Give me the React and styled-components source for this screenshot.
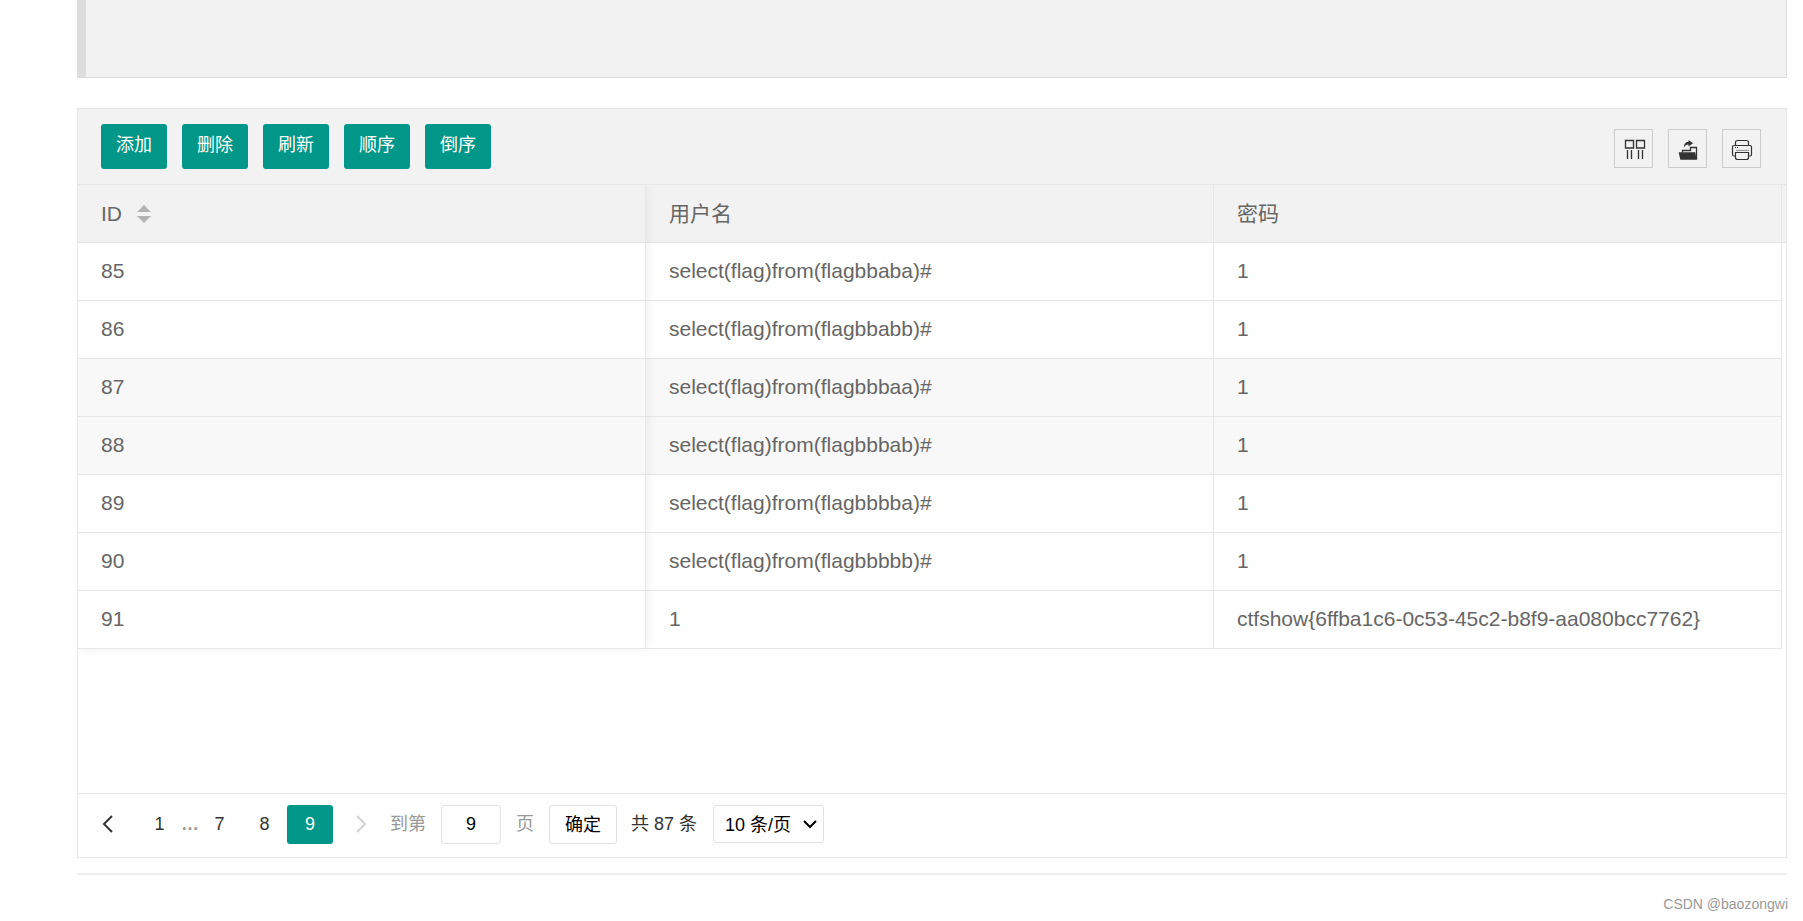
import React from "react";
import styled, { createGlobalStyle, css } from "styled-components";

const Global = createGlobalStyle`
  *, *::before, *::after { box-sizing: border-box; }
  body {
    margin: 0;
    background: #fff;
    color: #666;
    font: 21px/36px "Liberation Sans", "Noto Sans CJK SC", sans-serif;
  }
  button, input, select { font: inherit; margin: 0; }
`;

const Page = styled.main`
  padding: 0 16px 0 77px;
`;

const Quote = styled.blockquote`
  margin: 0 0 30px;
  height: 78px;
  background: #f2f2f2;
  border: 1px solid #ddd;
  border-top: 0;
  border-left: 9px solid #ddd;
`;

const TableView = styled.section`
  border: 1px solid #e6e6e6;
`;

const Toolbar = styled.div`
  display: flex;
  justify-content: space-between;
  align-items: center;
  padding: 15px 25px 15px 23px;
  background: #f2f2f2;
  border-bottom: 1px solid #e6e6e6;
`;

const Group = styled.div`
  display: flex;
  gap: 15px;
`;

const ActionButton = styled.button`
  height: 45px;
  padding: 0 15px 2px;
  border: 0;
  border-radius: 3px;
  background: #009688;
  color: #fff;
  font-size: 18px;
  line-height: 43px;
`;

const ToolButton = styled.button`
  display: block;
  width: 39px;
  height: 39px;
  margin-top: 4px;
  padding: 0;
  border: 1px solid #ccc;
  background: none;
  color: #333;
  svg { display: block; }
`;

const Body = styled.div`
  min-height: 608px;
  background: linear-gradient(#f2f2f2 57px, #e6e6e6 57px, #e6e6e6 58px, transparent 58px);
`;

const Frame = styled.div`
  position: relative;
  margin-right: 4px;
  &::after {
    content: "";
    position: absolute;
    inset: 0 auto 0 0;
    width: calc(100% / 3);
    box-shadow: 1px 0 12px rgba(0, 0, 0, 0.06);
    clip-path: inset(0 -14px -14px 0);
    pointer-events: none;
  }
`;

const Table = styled.table`
  width: 100%;
  table-layout: fixed;
  border-collapse: separate;
  border-spacing: 0;
`;

const cell = css`
  height: 58px;
  padding: 0 22px 0 23px;
  border: solid #e6e6e6;
  border-width: 0 1px 1px 0;
  text-align: left;
  font-weight: 400;
  white-space: nowrap;
`;

const HeadCell = styled.th`
  ${cell}
`;

const Cell = styled.td`
  ${cell}
  padding-bottom: 2px;
  background: ${(p) => (p.$shaded ? "#f8f8f8" : "#fff")};
`;

const SortMark = styled.svg`
  margin-left: 15px;
  vertical-align: -2px;
`;

const Pager = styled.nav`
  display: flex;
  align-items: flex-start;
  height: 64px;
  padding: 11px 7px;
  border-top: 1px solid #e6e6e6;
  font-size: 18px;
  line-height: 39px;
  color: #333;
`;

const PageButton = styled.button`
  display: flex;
  justify-content: center;
  align-items: center;
  width: ${(p) => (p.$wide ? 56 : p.$current ? 46 : 45)}px;
  height: 39px;
  margin-right: ${(p) => (p.$spaced ? 7 : 0)}px;
  padding: 0;
  border: 0;
  border-radius: 3px;
  background: ${(p) => (p.$current ? "#009688" : "none")};
  color: ${(p) => (p.$current ? "#fff" : p.disabled ? "#d2d2d2" : "#333")};
  svg { margin-bottom: 2px; }
`;

const Dots = styled.span`
  width: 15px;
  margin-left: -1px;
  margin-right: 1px;
  color: #999;
  font-weight: 700;
`;

const Skip = styled.label`
  display: flex;
  gap: 15px;
  margin-left: 1px;
  color: #999;
`;

const PageInput = styled.input`
  width: 60px;
  height: 39px;
  padding: 0;
  border: 1px solid #e2e2e2;
  border-radius: 3px;
  background: #fff;
  color: #000;
  text-align: center;
`;

const Confirm = styled.button`
  height: 39px;
  margin: 0 14px 0 15px;
  padding: 0 15px;
  border: 1px solid #e2e2e2;
  border-radius: 3px;
  background: #fff;
  color: #000;
`;

const Limit = styled.span`
  position: relative;
  margin-left: 16px;
  svg {
    position: absolute;
    top: 14px;
    right: 6px;
    pointer-events: none;
  }
`;

const LimitSelect = styled.select`
  display: block;
  width: 111px;
  height: 38px;
  padding: 0 0 0 11px;
  appearance: none;
  border: 1px solid #e2e2e2;
  border-radius: 3px;
  background: #fff;
  color: #000;
`;

const Rule = styled.hr`
  height: 2px;
  margin: 15px 0;
  border: 0;
  background: #eee;
`;

const Credit = styled.footer`
  margin-right: -1px;
  text-align: right;
  font-size: 14px;
  line-height: 28px;
  color: #999;
`;

const rows = [
  ["85", "select(flag)from(flagbbaba)#", "1"],
  ["86", "select(flag)from(flagbbabb)#", "1"],
  ["87", "select(flag)from(flagbbbaa)#", "1"],
  ["88", "select(flag)from(flagbbbab)#", "1"],
  ["89", "select(flag)from(flagbbbba)#", "1"],
  ["90", "select(flag)from(flagbbbbb)#", "1"],
  ["91", "1", "ctfshow{6ffba1c6-0c53-45c2-b8f9-aa080bcc7762}"],
];
const shaded = ["87", "88"];

const ColumnsIcon = () => (
  <svg width="37" height="37" viewBox="0 0 37 37" fill="none" stroke="currentColor" strokeWidth="1.300">
    <path d="M10.500 10.500h8v7.500h-8zM21.500 10.500h8v7.500h-8z" />
    <path d="M12.500 20v9M16.500 20v9M23.500 20v9M27.500 20v9" />
  </svg>
);

const ExportIcon = () => (
  <svg width="37" height="37" viewBox="0 0 37 37" fill="currentColor">
    <path d="M9.700 22.300h16.500l1.500 7.500H12q-.6 0-.8-.6z" />
    <path d="M13.500 22.500V20.500h8v-3h6v12" fill="none" stroke="currentColor" strokeWidth="1.300" />
    <path d="M15 17.500c-.2-3.500 1.500-5.500 4.500-5.500V10l4.500 3.300-4.500 3.200V14.500c-2 0-3.400.8-4.500 3z" />
  </svg>
);

const PrintIcon = () => (
  <svg width="37" height="37" viewBox="0 0 37 37" fill="none" stroke="currentColor" strokeWidth="1.200">
    <path d="M12.500 15v-2.500q0-2 2-2h9q2 0 2 2V15" />
    <path d="M12 26h-1q-1.500 0-1.500-1.500V17q0-1.500 1.500-1.500h16q1.500 0 1.500 1.500v7.500q0 1.500-1.500 1.500h-1" />
    <path d="M12.500 22.500h13v5q0 2-2 2h-9q-2 0-2-2z" />
    <path d="M13 20.500h13" stroke="#999" />
    <path d="M12 17.500h1M14 17.500h1" />
  </svg>
);

const Chevron = ({ d }) => (
  <svg width="14" height="20" viewBox="0 0 14 20" fill="none" stroke="currentColor" strokeWidth="2">
    <path d={d} />
  </svg>
);

export default function App() {
  return (
    <Page>
      <Global />
      <Quote />
      <TableView>
        <Toolbar>
          <Group>
            {["添加", "删除", "刷新", "顺序", "倒序"].map((t) => (
              <ActionButton key={t} type="button">{t}</ActionButton>
            ))}
          </Group>
          <Group>
            <ToolButton type="button" aria-label="筛选列"><ColumnsIcon /></ToolButton>
            <ToolButton type="button" aria-label="导出"><ExportIcon /></ToolButton>
            <ToolButton type="button" aria-label="打印"><PrintIcon /></ToolButton>
          </Group>
        </Toolbar>
        <Body>
          <Frame>
            <Table>
              <thead>
                <tr>
                  <HeadCell>
                    ID
                    <SortMark width="14" height="18" viewBox="0 0 14 18" fill="#b2b2b2">
                      <path d="M7 0l7 7H0zM0 11h14l-7 7z" />
                    </SortMark>
                  </HeadCell>
                  <HeadCell>用户名</HeadCell>
                  <HeadCell>密码</HeadCell>
                </tr>
              </thead>
              <tbody>
                {rows.map((row) => (
                  <tr key={row[0]}>
                    {row.map((value, i) => (
                      <Cell key={i} $shaded={shaded.includes(row[0])}>{value}</Cell>
                    ))}
                  </tr>
                ))}
              </tbody>
            </Table>
          </Frame>
        </Body>
        <Pager>
          <PageButton type="button" aria-label="上一页" $spaced>
            <Chevron d="M11 2L3 10l8 8" />
          </PageButton>
          <PageButton type="button">1</PageButton>
          <Dots>…</Dots>
          <PageButton type="button">7</PageButton>
          <PageButton type="button">8</PageButton>
          <PageButton type="button" $current>9</PageButton>
          <PageButton type="button" aria-label="下一页" disabled $wide>
            <Chevron d="M3 2l8 8-8 8" />
          </PageButton>
          <Skip>
            到第
            <PageInput type="text" defaultValue="9" />
            页
          </Skip>
          <Confirm type="button">确定</Confirm>
          <span>共 87 条</span>
          <Limit>
            <LimitSelect aria-label="每页条数" defaultValue="10">
              <option value="10">10 条/页</option>
              <option value="20">20 条/页</option>
            </LimitSelect>
            <svg width="16" height="12" viewBox="0 0 16 12" fill="none" stroke="#000" strokeWidth="2">
              <path d="M2 2l6 6 6-6" />
            </svg>
          </Limit>
        </Pager>
      </TableView>
      <Rule />
      <Credit>CSDN @baozongwi</Credit>
    </Page>
  );
}
